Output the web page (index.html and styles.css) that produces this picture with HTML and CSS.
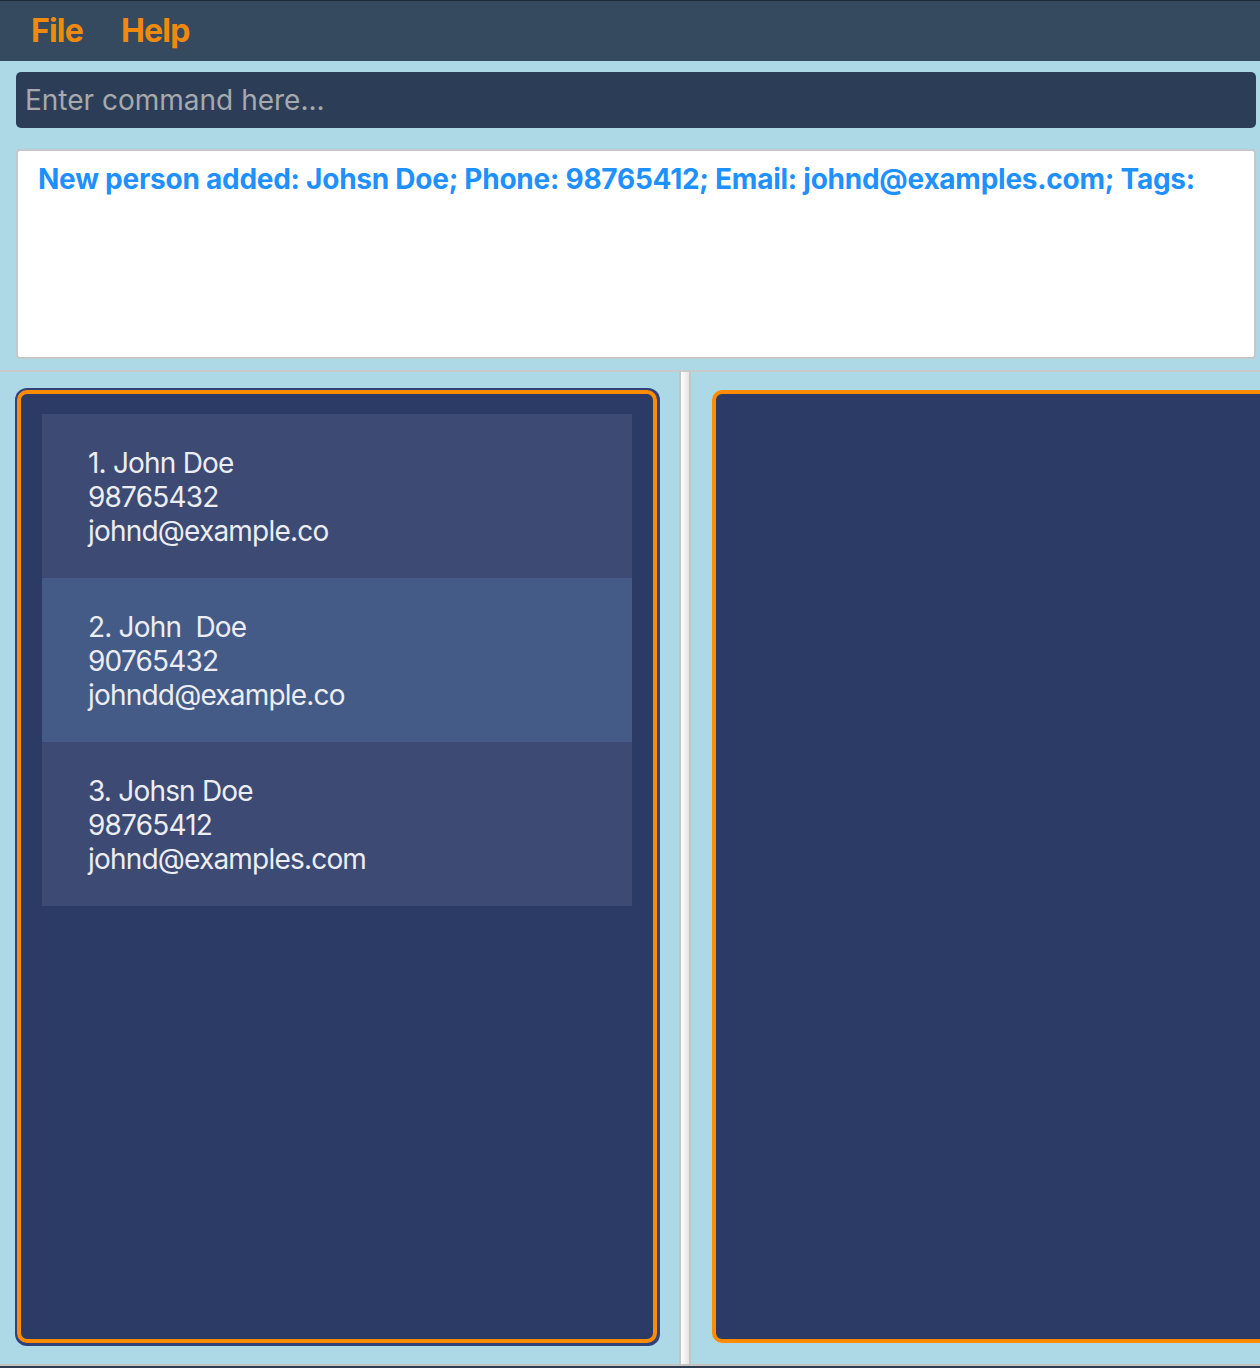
FILE: index.html
```html
<!DOCTYPE html>
<html>
<head>
<meta charset="utf-8">
<link rel="stylesheet" href="styles.css">
</head>
<body>
<div class="app">
  <div class="menubar">
    <span class="menu-item">File</span>
    <span class="menu-item">Help</span>
  </div>
  <div class="command-area">
    <div class="command-box">Enter command here...</div>
  </div>
  <div class="result-area">
    <div class="result-box">New person added: Johsn Doe; Phone: 98765412; Email: johnd@examples.com; Tags:</div>
  </div>
  <div class="split">
    <div class="left-pane">
      <div class="panel-outer">
        <div class="panel">
          <div class="cell">
            <div>1. John Doe</div>
            <div>98765432</div>
            <div>johnd@example.co</div>
          </div>
          <div class="cell alt">
            <div>2. John&nbsp; Doe</div>
            <div>90765432</div>
            <div>johndd@example.co</div>
          </div>
          <div class="cell">
            <div>3. Johsn Doe</div>
            <div>98765412</div>
            <div>johnd@examples.com</div>
          </div>
        </div>
      </div>
    </div>
    <div class="divider"></div>
    <div class="right-pane">
      <div class="panel right-panel"></div>
    </div>
  </div>
  <div class="bottom-bar"></div>
</div>
</body>
</html>
```

FILE: styles.css
```css
html, body {
  margin: 0;
  padding: 0;
}
body {
  background: #add8e6;
  font-family: Inter, "Noto Sans", sans-serif;
  overflow: hidden;
  width: 1260px;
  height: 1368px;
}
.app {
  display: flex;
  flex-direction: column;
  height: 1368px;
}
.menubar {
  height: 61px;
  box-sizing: border-box;
  border-top: 1px solid #1f2a36;
  background: #354a5f;
  display: flex;
  align-items: center;
  padding-left: 31px;
  gap: 38px;
}
.menu-item {
  color: #f08a0c;
  font-weight: 700;
  font-size: 32px;
  letter-spacing: -0.8px;
  line-height: 1;
}
.command-area {
  padding: 11px 4px 0 16px;
}
.command-box {
  height: 56px;
  box-sizing: border-box;
  background: #2c3e57;
  border-radius: 5px;
  color: #a6a9ad;
  font-size: 28px;
  letter-spacing: 0;
  padding-left: 9px;
  display: flex;
  align-items: center;
}
.result-area {
  padding: 21px 4px 0 16px;
}
.result-box {
  height: 210px;
  box-sizing: border-box;
  background: #fff;
  border: 2px solid #c4c8ca;
  border-radius: 4px;
  color: #1e90ff;
  font-weight: 700;
  font-size: 28px;
  letter-spacing: -0.25px;
  padding: 11px 20px;
  white-space: nowrap;
}
.split {
  margin-top: 11px;
  border-top: 2px solid #c8cacb;
  flex: 1;
  display: flex;
  min-height: 0;
}
.left-pane {
  width: 679px;
  box-sizing: border-box;
  padding: 16px 19px 18px 15px;
  display: flex;
}
.panel-outer {
  flex: 1;
  background: #31427a;
  border-radius: 12px;
  padding: 2px 3px 3px 2px;
  display: flex;
}
.panel {
  flex: 1;
  background: #2c3a66;
  border: 4px solid #ff8c00;
  border-radius: 10px;
  padding: 20px 21px 0 21px;
}
.cell {
  background: #3c4a74;
  color: #ebedf2;
  font-size: 28px;
  line-height: 34px;
  letter-spacing: -0.8px;
  padding: 32px 0 30px 46px;
}
.cell.alt {
  background: #445b87;
}
.divider {
  width: 12px;
  box-sizing: border-box;
  border-left: 2px solid #c4c4c4;
  border-right: 2px solid #c4c4c4;
  background: linear-gradient(to right, #ffffff, #e4e4e4);
}
.right-pane {
  flex: 1;
  padding: 18px 0 21px 21px;
  display: flex;
  min-width: 0;
}
.right-panel {
  padding: 0;
  border-right: none;
  border-radius: 10px 0 0 10px;
}
.bottom-bar {
  height: 4px;
  border-top: 2px solid #c4c4c4;
  background: #2c3e50;
  box-sizing: border-box;
}
```
